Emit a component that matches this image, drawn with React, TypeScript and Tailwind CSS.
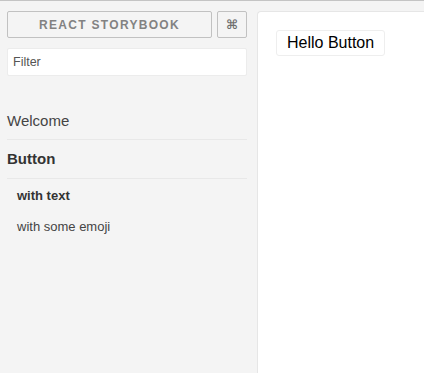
import React from "react";

export default function App() {
  const font = { fontFamily: '"Liberation Sans", Arial, sans-serif' };
  return (
    <div
      className="w-[424px] h-[373px] flex border-t border-[#c4c4c4] bg-[#f4f4f4] overflow-hidden"
      style={font}
    >
      <div className="w-[257px] shrink-0 pl-[7px] pr-[10px] pt-[10px] flex flex-col">
        <div className="flex gap-[5px]">
          <div className="flex-1 h-[27px] border border-[#c1c1c1] rounded-[2px] flex items-center justify-center text-[12px] font-bold tracking-[1.3px] text-[#828282] uppercase">
            React Storybook
          </div>
          <div
            className="w-[30px] h-[27px] border border-[#c1c1c1] rounded-[2px] flex items-center justify-center text-[13px] font-bold text-[#6f6f6f]"
            style={{ fontFamily: '"DejaVu Sans", sans-serif' }}
          >
            ⌘
          </div>
        </div>
        <div className="mt-[10px] h-[28px] bg-white border border-[#ececec] rounded-[2px] flex items-center pl-[5px] text-[12.5px] text-[#555]">
          Filter
        </div>
        <div className="mt-[26px]">
          <div className="pt-[10px] pb-[9px] leading-[18px] text-[15px] text-[#444] border-b border-[#e8e8e8]">
            Welcome
          </div>
          <div className="pt-[10px] pb-[10px] leading-[18px] text-[15px] font-bold text-[#333] border-b border-[#e8e8e8]">
            Button
          </div>
          <div className="mt-[1px] pl-[10px]">
            <div className="py-[8px] leading-[15px] text-[13px] font-bold text-[#333]">
              with text
            </div>
            <div className="py-[8px] leading-[15px] text-[13px] text-[#444]">
              with some emoji
            </div>
          </div>
        </div>
      </div>
      <div className="flex-1 mt-[10px] bg-white border-l border-t border-[#e6e6e6] rounded-tl-[4px] p-[18px]">
        <div className="inline-flex items-center h-[26px] px-[10px] border border-[#eeeeee] rounded-[3px] text-[16px] text-black">
          Hello Button
        </div>
      </div>
    </div>
  );
}
